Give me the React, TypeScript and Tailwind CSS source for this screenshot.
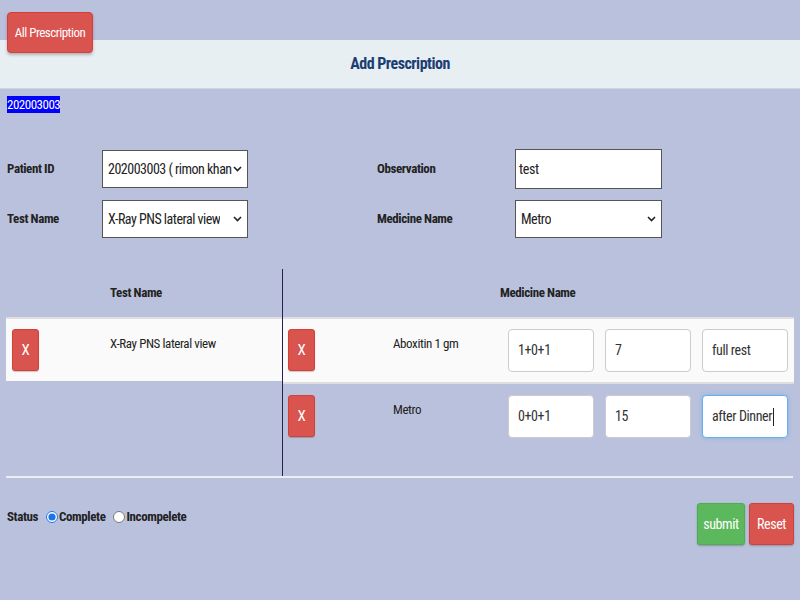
function XBtn() {
  return (
    <button className="w-[27px] h-[42px] rounded-[3px] bg-[#d9534f] border border-[#d43f3a] text-white text-[15px] flex items-center justify-center shadow-[0_1px_1px_rgba(0,0,0,0.2)]">
      X
    </button>
  );
}

function Chevron() {
  return (
    <svg width="9" height="6" viewBox="0 0 9 6" className="shrink-0">
      <path d="M1 1l3.5 3.5L8 1" fill="none" stroke="#222" strokeWidth="1.6" />
    </svg>
  );
}

function FakeSelect({ value, w }: { value: string; w: string }) {
  return (
    <div className={`${w} h-[38px] bg-white border border-[#555] flex items-center justify-between pl-[5px] pr-[5px] text-[14px] tracking-[-0.5px] text-[#222] overflow-hidden whitespace-nowrap`}>
      <span className="overflow-hidden">{value}</span>
      <Chevron />
    </div>
  );
}

function SmallInput({ value, focused }: { value: string; focused?: boolean }) {
  return (
    <div
      className={`w-[86px] h-[43px] bg-white rounded-[4px] flex items-center pl-[9px] text-[14px] tracking-[-0.4px] text-[#333] ${
        focused ? "border border-[#66afe9] shadow-[0_0_4px_rgba(102,175,233,0.7)]" : "border border-[#ccc]"
      }`}
    >
      {value}
      {focused && <span className="w-px h-[18px] bg-[#222] ml-px" />}
    </div>
  );
}

export default function App() {
  return (
    <div
      className="w-[800px] h-[600px] bg-[#bac1dd] text-[#222] text-[13px] tracking-[-0.4px] overflow-hidden"
      style={{ fontFamily: '"Roboto Condensed", "Liberation Sans", sans-serif' }}
    >
      <div className="pt-[12px] pl-[7px] relative z-10 h-[40px]">
        <button className="w-[86px] h-[41px] rounded-[4px] bg-[#d9534f] border border-[#d43f3a] text-white text-[13px] tracking-[-0.5px] shadow-[0_2px_3px_rgba(0,0,0,0.25)]">
          All Prescription
        </button>
      </div>
      <div className="h-[49px] bg-[#e8eff2] border-b border-[#cdd6df] flex items-center justify-center text-[16px] tracking-[-0.5px] font-bold text-[#1b3d72]">
        Add Prescription
      </div>
      <div className="pl-[7px] pt-[6px] h-[61px]">
        <span className="bg-[#0000ff] text-white text-[13px] tracking-[-0.5px] leading-[17px] inline-block">202003003</span>
      </div>

      <div className="flex flex-col gap-[12px]">
        <div className="flex items-center h-[38px]">
          <div className="w-[102px] pl-[7px] font-bold">Patient ID</div>
          <FakeSelect value="202003003 ( rimon khan" w="w-[146px]" />
          <div className="w-[138px] ml-[129px] font-bold">Observation</div>
          <div className="w-[147px] h-[40px] bg-white border border-[#555] flex items-center pl-[3px] text-[14px] tracking-[-0.4px]">
            test
          </div>
        </div>
        <div className="flex items-center h-[38px]">
          <div className="w-[102px] pl-[7px] font-bold">Test Name</div>
          <FakeSelect value="X-Ray PNS lateral view" w="w-[146px]" />
          <div className="w-[138px] ml-[129px] font-bold">Medicine Name</div>
          <FakeSelect value="Metro" w="w-[147px]" />
        </div>
      </div>

      <div className="mt-[31px] flex px-[6px]">
        <div className="w-[277px] border-r border-[#2a2050]">
          <div className="h-[48px] flex items-center pl-[104px] font-bold">Test Name</div>
          <div className="h-[64px] bg-[#fafafa] border-t-2 border-[#dedede] flex items-start pl-[6px] pt-[10px]">
            <XBtn />
            <span className="ml-[71px] mt-[5px]">X-Ray PNS lateral view</span>
          </div>
          <div className="h-[95px]" />
        </div>
        <div className="flex-1">
          <div className="h-[48px] flex items-center pl-[217px] font-bold">Medicine Name</div>
          <div className="h-[67px] bg-[#fafafa] border-t-2 border-b-2 border-[#dedede] flex items-start pl-[5px] pt-[10px]">
            <XBtn />
            <span className="w-[193px] pl-[78px] mt-[5px]">Aboxitin 1 gm</span>
            <div className="flex gap-[11px]">
              <SmallInput value="1+0+1" />
              <SmallInput value="7" />
              <SmallInput value="full rest" />
            </div>
          </div>
          <div className="flex items-start pl-[5px] pt-[11px]">
            <XBtn />
            <span className="w-[193px] pl-[78px] mt-[5px]">Metro</span>
            <div className="flex gap-[11px]">
              <SmallInput value="0+0+1" />
              <SmallInput value="15" />
              <SmallInput value="after Dinner" focused />
            </div>
          </div>
        </div>
      </div>
      <div className="mx-[6px] w-[787px] h-[2px] bg-[#eceef4]" />

      <div className="flex items-center justify-between pl-[7px] pr-[6px] mt-[25px]">
        <div className="flex items-center gap-[4px] mt-[-15px]">
          <span className="font-bold">Status</span>
          <label className="flex items-center gap-[1px] ml-[4px]">
            <input type="radio" name="st" defaultChecked className="w-[12px] h-[12px] m-0 accent-[#1a73e8]" />
            <span className="font-bold">Complete</span>
          </label>
          <label className="flex items-center gap-[1px] ml-[4px]">
            <input type="radio" name="st" className="w-[12px] h-[12px] m-0" />
            <span className="font-bold">Incompelete</span>
          </label>
        </div>
        <div className="flex gap-[4px]">
          <button className="w-[48px] h-[42px] rounded-[3px] bg-[#5cb85c] border border-[#4cae4c] text-white text-[14px] tracking-[-0.4px] shadow-[0_1px_2px_rgba(0,0,0,0.25)]">
            submit
          </button>
          <button className="w-[45px] h-[42px] rounded-[3px] bg-[#d9534f] border border-[#d43f3a] text-white text-[14px] tracking-[-0.4px] shadow-[0_1px_2px_rgba(0,0,0,0.25)]">
            Reset
          </button>
        </div>
      </div>
    </div>
  );
}
